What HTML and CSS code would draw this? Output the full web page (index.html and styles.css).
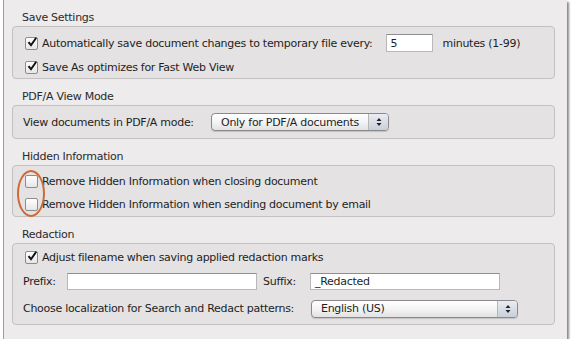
FILE: index.html
```html
<!DOCTYPE html>
<html lang="en">
<head>
  <meta charset="UTF-8" />
  <title>Documents Preferences</title>
  <link rel="stylesheet" href="styles.css">
</head>
<body>
  <div class="panel">

    <!-- SAVE SETTINGS -->
    <div class="group-title">Save Settings</div>
    <div class="group save">
      <div class="row">
        <span class="check on"><svg viewBox="0 0 12 12"><path d="M2.5 6.2 L5 9.2 L10.2 1.8" /></svg></span>
        <span class="label">Automatically save document changes to temporary file every:</span>
        <span class="field minutes">5</span>
        <span class="label after">minutes (1-99)</span>
      </div>
      <div class="row">
        <span class="check on"><svg viewBox="0 0 12 12"><path d="M2.5 6.2 L5 9.2 L10.2 1.8" /></svg></span>
        <span class="label">Save As optimizes for Fast Web View</span>
      </div>
    </div>

    <!-- PDF/A -->
    <div class="group-title">PDF/A View Mode</div>
    <div class="group pdfa">
      <div class="row">
        <span class="label pdfa-label">View documents in PDF/A mode:</span>
        <span class="popup pdfa-popup">
          <span class="popup-text">Only for PDF/A documents</span>
          <span class="stepper"><svg viewBox="0 0 8 12"><path d="M4 2 L6.5 5 L1.5 5 Z M4 10 L6.5 7 L1.5 7 Z" /></svg></span>
        </span>
      </div>
    </div>

    <!-- HIDDEN INFO -->
    <div class="group-title">Hidden Information</div>
    <div class="group hidden-info">
      <div class="row">
        <span class="check"></span>
        <span class="label">Remove Hidden Information when closing document</span>
      </div>
      <div class="row">
        <span class="check"></span>
        <span class="label">Remove Hidden Information when sending document by email</span>
      </div>
      <span class="callout"></span>
    </div>

    <!-- REDACTION -->
    <div class="group-title">Redaction</div>
    <div class="group redaction">
      <div class="row">
        <span class="check on"><svg viewBox="0 0 12 12"><path d="M2.5 6.2 L5 9.2 L10.2 1.8" /></svg></span>
        <span class="label">Adjust filename when saving applied redaction marks</span>
      </div>
      <div class="row">
        <span class="label prefix-label">Prefix:</span>
        <span class="field name-field"></span>
        <span class="label suffix-label">Suffix:</span>
        <span class="field name-field">_Redacted</span>
      </div>
      <div class="row last">
        <span class="label lang-label">Choose localization for Search and Redact patterns:</span>
        <span class="popup lang-popup">
          <span class="popup-text">English (US)</span>
          <span class="stepper"><svg viewBox="0 0 8 12"><path d="M4 2 L6.5 5 L1.5 5 Z M4 10 L6.5 7 L1.5 7 Z" /></svg></span>
        </span>
      </div>
    </div>

  </div>
</body>
</html>
```

FILE: styles.css
```css
body {
  margin: 0;
  background: #ffffff;
  font-family: "DejaVu Sans", "Liberation Sans", sans-serif;
  font-size: 11px;
  letter-spacing: -0.28px;
  color: #1e1e1e;
}

/* OUTER WINDOW */
.panel {
  width: 543px;
  height: 329px;
  margin-left: 3px;
  padding: 10px 12px 0 8px;
  background: #edebeb;
  border-left: 1px solid #9c9c9c;
  box-shadow: 2px 2px 2px #8a8a8a;
  overflow: hidden;
}

.group-title {
  height: 16px;
  line-height: 16px;
  padding-left: 10px;
  color: #2a2a2a;
}

.group {
  position: relative;
  background: #e4e2e2;
  border: 1px solid #c2c0c0;
  border-radius: 4px;
  padding: 0 12px;
  margin-bottom: 10px;
  display: flex;
  flex-direction: column;
}

.row {
  display: flex;
  align-items: center;
  height: 23px;
}

.save { padding: 5px 12px 0; gap: 2px; }
.save .row { height: 22px; }
.pdfa { padding: 6px 10px; }
.pdfa .row { height: 20px; }
.hidden-info { padding: 4px 12px 0; }
.redaction { padding: 2px 10px 4px; gap: 1px; }
.redaction .row.last { margin-top: 3px; }
.redaction .row:first-child { padding-left: 2px; }

.label {
  white-space: nowrap;
}

/* CHECKBOX */
.check {
  flex: none;
  width: 11px;
  height: 11px;
  margin-right: 4px;
  border: 1px solid #8d8d8d;
  border-radius: 2px;
  background: linear-gradient(#ffffff, #e6e6e6);
  position: relative;
}

.check svg {
  position: absolute;
  left: 0;
  top: -2px;
  width: 12px;
  height: 12px;
  overflow: visible;
}

.check svg path {
  fill: none;
  stroke: #111;
  stroke-width: 2;
  stroke-linejoin: miter;
}

/* TEXT FIELDS */
.field {
  display: flex;
  align-items: center;
  height: 17px;
  padding-left: 4px;
  background: #ffffff;
  border: 1px solid #b8b8b8;
  border-top-color: #8e8e8e;
  box-sizing: border-box;
}

.minutes {
  width: 47px;
  height: 18px;
  margin-left: 13px;
}

.after { margin-left: 10px; }

.prefix-label { width: 44px; }
.name-field { width: 190px; }
.suffix-label { margin-left: 6px; width: 47px; }

/* POPUP BUTTONS */
.popup {
  display: flex;
  align-items: center;
  height: 18px;
  box-sizing: border-box;
  border: 1px solid #8a8a8a;
  border-radius: 4px;
  background: linear-gradient(#ffffff, #f4f4f4 50%, #e2e2e2);
  box-shadow: 0 1px 1px rgba(0, 0, 0, 0.15);
}

.popup-text {
  flex: 1;
  padding-left: 9px;
  white-space: nowrap;
}

.stepper {
  width: 19px;
  height: 100%;
  border-left: 1px solid #b6b6b6;
  border-radius: 0 3px 3px 0;
  background: linear-gradient(#e9edf3, #c9d0da);
  display: flex;
  align-items: center;
  justify-content: center;
}

.stepper svg {
  width: 8px;
  height: 12px;
}

.stepper path { fill: #222; }

.pdfa-label { width: 188px; }
.pdfa-popup { width: 178px; }

.lang-label { width: 288px; }
.lang-popup { width: 207px; }

/* ANNOTATION */
.callout {
  position: absolute;
  left: 4px;
  top: 4px;
  width: 24px;
  height: 43px;
  border: 2px solid #cf6a34;
  border-radius: 50%;
  pointer-events: none;
}
```
